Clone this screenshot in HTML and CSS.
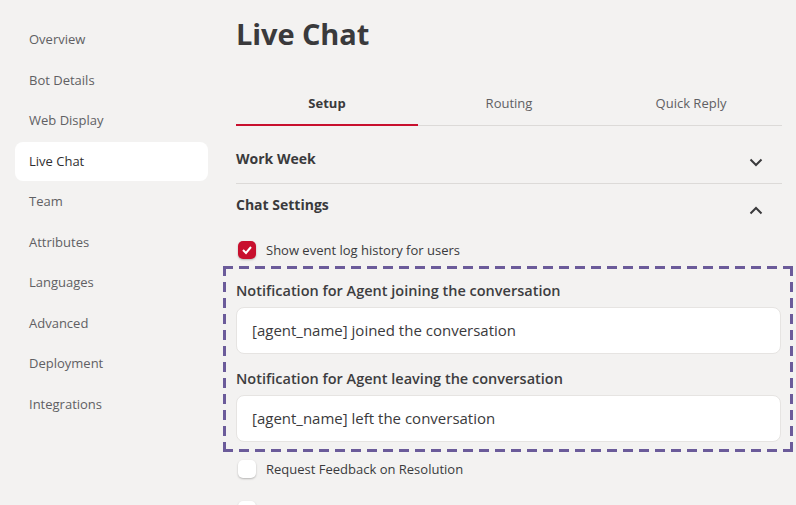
FILE: index.html
```html
<!DOCTYPE html>
<html>
<head>
<meta charset="utf-8">
<link rel="stylesheet" href="styles.css">
</head>
<body>
<div class="app">
  <nav class="sidebar">
    <div class="nav-item">Overview</div>
    <div class="nav-item">Bot Details</div>
    <div class="nav-item">Web Display</div>
    <div class="nav-item active">Live Chat</div>
    <div class="nav-item">Team</div>
    <div class="nav-item">Attributes</div>
    <div class="nav-item">Languages</div>
    <div class="nav-item">Advanced</div>
    <div class="nav-item">Deployment</div>
    <div class="nav-item">Integrations</div>
  </nav>
  <main class="main">
    <h1 class="title">Live Chat</h1>
    <div class="tabs">
      <div class="tab active">Setup</div>
      <div class="tab">Routing</div>
      <div class="tab">Quick Reply</div>
    </div>
    <div class="acc-head bordered">
      <span>Work Week</span>
      <svg class="chev" width="14" height="9" viewBox="0 0 14 9"><path d="M1.5 1.5 L7 7 L12.5 1.5" fill="none" stroke="#3a3a3c" stroke-width="2"/></svg>
    </div>
    <div class="acc-head open">
      <span>Chat Settings</span>
      <svg class="chev" width="14" height="9" viewBox="0 0 14 9"><path d="M1.5 7.5 L7 2 L12.5 7.5" fill="none" stroke="#3a3a3c" stroke-width="2"/></svg>
    </div>
    <div class="check-row">
      <span class="check checked"><svg width="12" height="10" viewBox="0 0 12 10"><path d="M2 5 L5 8 L10 2" fill="none" stroke="#fff" stroke-width="2"/></svg></span>
      <span>Show event log history for users</span>
    </div>
    <div class="highlight">
      <label class="field-label">Notification for Agent joining the conversation</label>
      <div class="input">[agent_name] joined the conversation</div>
      <label class="field-label">Notification for Agent leaving the conversation</label>
      <div class="input">[agent_name] left the conversation</div>
    </div>
    <div class="check-row">
      <span class="check"></span>
      <span>Request Feedback on Resolution</span>
    </div>
    <div class="check-row">
      <span class="check"></span>
      <span></span>
    </div>
  </main>
</div>
</body>
</html>
```
FILE: styles.css
```css
* { box-sizing: border-box; }
html, body { margin: 0; padding: 0; }
body {
  background: #f3f2f1;
  font-family: "Open Sans", "Noto Sans", sans-serif;
  color: #3a3a3c;
  width: 796px;
  height: 505px;
  overflow: hidden;
}
.app { display: flex; }
.sidebar {
  width: 193px;
  margin-left: 15px;
  padding-top: 19px;
  display: flex;
  flex-direction: column;
  flex-shrink: 0;
}
.nav-item {
  height: 40.5px;
  display: flex;
  align-items: center;
  padding-left: 14px;
  font-size: 13px;
  color: #606063;
  border-radius: 8px;
}
.nav-item.active {
  background: #fff;
  color: #2f2f31;
  height: 39px;
  margin: 1px 0 0.5px;
}
.main {
  margin-left: 28px;
  width: 546px;
  display: flex;
  flex-direction: column;
}
.title {
  margin: 14px 0 0;
  font-size: 29px;
  font-weight: 700;
  line-height: 40px;
  color: #3a3a3c;
  letter-spacing: -0.1px;
}
.tabs {
  display: flex;
  margin-top: 36px;
  border-bottom: 1px solid #dcdad8;
}
.tab {
  flex: 1;
  text-align: center;
  font-size: 13px;
  color: #606063;
  height: 36px;
  line-height: 26px;
  border-bottom: 2px solid transparent;
  margin-bottom: -1px;
}
.tab.active {
  font-weight: 700;
  color: #3a3a3c;
  border-bottom-color: #c8102e;
}
.acc-head {
  display: flex;
  justify-content: space-between;
  align-items: flex-start;
  font-size: 14px;
  font-weight: 700;
  padding-right: 19px;
}
.acc-head span { line-height: 20px; }
.acc-head.bordered {
  border-bottom: 1px solid #dcdad8;
  height: 58px;
  padding-top: 23px;
}
.acc-head.bordered .chev { margin-top: 9px; }
.acc-head.open {
  height: 57px;
  padding-top: 11px;
}
.acc-head.open .chev { margin-top: 11px; }
.check-row {
  display: flex;
  align-items: center;
  gap: 10px;
  height: 18px;
  margin-left: 2px;
  font-size: 13px;
  color: #3a3a3c;
  flex-shrink: 0;
}
.check {
  width: 18px;
  height: 18px;
  border-radius: 5px;
  background: #fff;
  box-shadow: 0 1px 2px rgba(0,0,0,0.25);
  display: flex;
  align-items: center;
  justify-content: center;
  flex-shrink: 0;
}
.check.checked { background: #c8102e; }
.highlight {
  margin: 7px 0 0 -13px;
  width: 570px;
  padding: 15px 12px 10px 13px;
  display: flex;
  flex-direction: column;
  flex-shrink: 0;
  background:
    repeating-linear-gradient(90deg, #6b5b9a 0 10px, transparent 10px 16px) left top / 100% 3px no-repeat,
    repeating-linear-gradient(90deg, #6b5b9a 0 10px, transparent 10px 16px) left bottom / 100% 3px no-repeat,
    repeating-linear-gradient(180deg, #6b5b9a 0 10px, transparent 10px 16px) left top / 3px 100% no-repeat,
    repeating-linear-gradient(180deg, #6b5b9a 0 10px, transparent 10px 16px) right top / 3px 100% no-repeat;
}
.highlight + .check-row { margin-top: 8px; }
.check-row + .check-row { margin-top: 23px; }
.field-label {
  font-size: 14.5px;
  font-weight: 600;
  color: #3d3d40;
  line-height: 20px;
  margin-bottom: 6px;
}
.input {
  height: 47px;
  background: #fff;
  border: 1px solid #e6e4e2;
  border-radius: 8px;
  padding: 0 0 2px 15px;
  display: flex;
  align-items: center;
  font-size: 15px;
  color: #3a3a3c;
  margin-bottom: 15px;
  flex-shrink: 0;
}
.input:last-child { margin-bottom: 0; }
```
